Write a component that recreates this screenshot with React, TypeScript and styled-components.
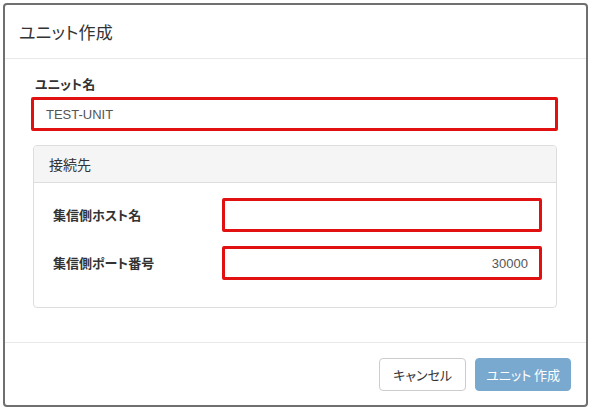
import React from "react";
import styled, { createGlobalStyle } from "styled-components";

const Global = createGlobalStyle`
  html, body { margin: 0; padding: 0; background: #ffffff; }
  body {
    font-family: "Noto Sans CJK JP", "Liberation Sans", sans-serif;
    font-feature-settings: "palt";
    color: #333333;
  }
  * { box-sizing: border-box; }
`;

const Page = styled.div`
  padding: 3px 2px 4px 3px;
  width: 590px;
  height: 411px;
`;

const Modal = styled.div`
  width: 585px;
  height: 404px;
  border: 2px solid #6f6f6f;
  border-radius: 4px;
  background: #ffffff;
  display: flex;
  flex-direction: column;
  overflow: hidden;
`;

const Header = styled.div`
  height: 54px;
  flex: none;
  display: flex;
  align-items: center;
  padding-left: 14px;
  border-bottom: 1px solid #e9e9e9;
`;

const Title = styled.h4`
  margin: 0;
  font-size: 17px;
  font-weight: 400;
  color: #333333;
  letter-spacing: 0.2px;
`;

const Body = styled.div`
  flex: 1;
  padding: 16px 28px 0 26px;
  border-bottom: 1px solid #e9e9e9;
`;

const Label = styled.label<{ $indent?: number }>`
  display: block;
  font-size: 13px;
  font-weight: 700;
  line-height: 18px;
  color: #333333;
  padding-left: ${(p) => p.$indent ?? 0}px;
`;

const Input = styled.div<{ $align?: "left" | "right" }>`
  height: 34px;
  border: 3px solid #e21111;
  border-radius: 2px;
  display: flex;
  align-items: center;
  justify-content: ${(p) => (p.$align === "right" ? "flex-end" : "flex-start")};
  padding: 0 11px 0 12px;
  font-family: "Liberation Sans", "Noto Sans CJK JP", sans-serif;
  font-size: 13px;
  color: #555555;
  background: #ffffff;
`;

const NameGroup = styled.div`
  display: flex;
  flex-direction: column;
  gap: 4px;
`;

const Panel = styled.div`
  margin: 14px 1px 0 2px;
  border: 1px solid #dddddd;
  border-radius: 4px;
  overflow: hidden;
`;

const PanelHeading = styled.div`
  height: 37px;
  background: #f5f5f5;
  border-bottom: 1px solid #dddddd;
  display: flex;
  align-items: center;
  padding-left: 15px;
  font-size: 14px;
  color: #333333;
`;

const PanelBody = styled.div`
  padding: 15px 14px 27px 19px;
  display: flex;
  flex-direction: column;
  gap: 14px;
`;

const Row = styled.div`
  display: grid;
  grid-template-columns: 169px 1fr;
  align-items: center;
`;

const Footer = styled.div`
  height: 62px;
  flex: none;
  display: flex;
  justify-content: flex-end;
  align-items: flex-start;
  padding: 15px 15px 0 0;
  gap: 9px;
`;

const Button = styled.button<{ $primary?: boolean }>`
  height: 33px;
  padding: 0 ${(p) => (p.$primary ? "10px" : "13px")};
  border-radius: 4px;
  font-family: "Noto Sans CJK JP", "Liberation Sans", sans-serif;
  font-feature-settings: "palt";
  font-size: 13px;
  border: 1px solid ${(p) => (p.$primary ? "#7aa9d0" : "#cccccc")};
  background: ${(p) => (p.$primary ? "#7aa9d0" : "#ffffff")};
  color: ${(p) => (p.$primary ? "#ffffff" : "#333333")};
  cursor: pointer;
`;

export default function App() {
  return (
    <>
      <Global />
      <Page>
        <Modal>
          <Header>
            <Title>ユニット作成</Title>
          </Header>
          <Body>
            <NameGroup>
              <Label $indent={4}>ユニット名</Label>
              <Input>TEST-UNIT</Input>
            </NameGroup>
            <Panel>
              <PanelHeading>接続先</PanelHeading>
              <PanelBody>
                <Row>
                  <Label>集信側ホスト名</Label>
                  <Input />
                </Row>
                <Row>
                  <Label>集信側ポート番号</Label>
                  <Input $align="right">30000</Input>
                </Row>
              </PanelBody>
            </Panel>
          </Body>
          <Footer>
            <Button>キャンセル</Button>
            <Button $primary>ユニット 作成</Button>
          </Footer>
        </Modal>
      </Page>
    </>
  );
}
